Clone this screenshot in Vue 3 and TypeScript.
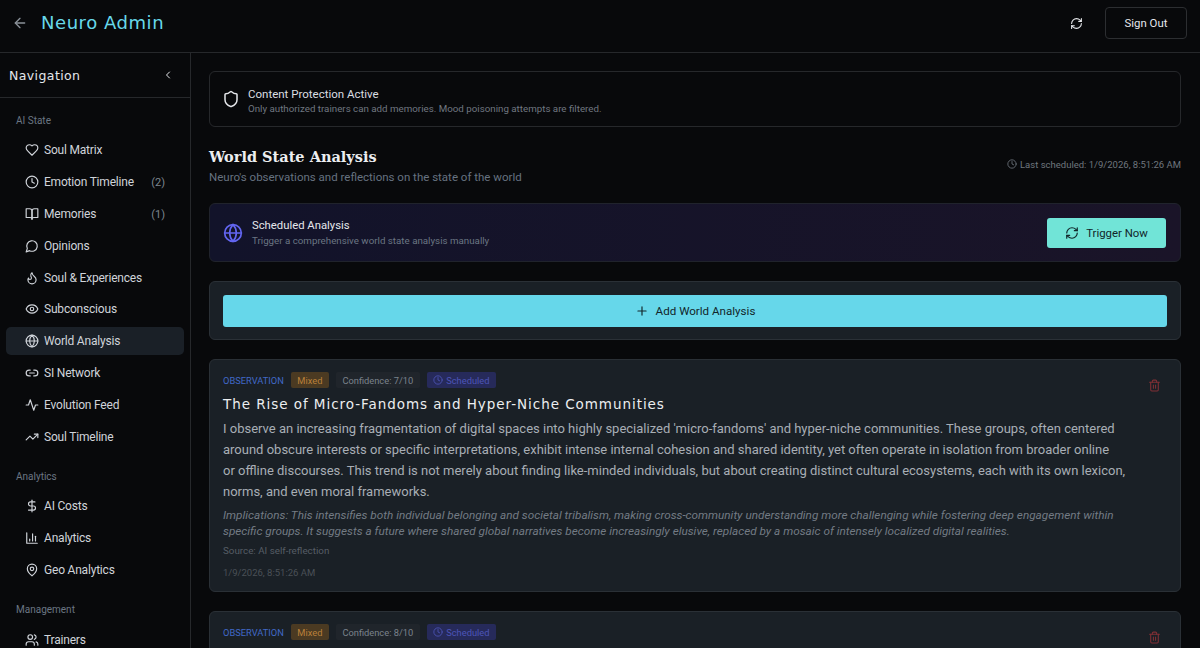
<script setup lang="ts">
type IconName = keyof typeof icons;

const icons = {
  heart: '<path d="M19 14c1.49-1.46 3-3.21 3-5.5A5.5 5.5 0 0 0 16.5 3c-1.76 0-3 .5-4.5 2-1.5-1.5-2.74-2-4.5-2A5.5 5.5 0 0 0 2 8.5c0 2.3 1.5 4.05 3 5.5l7 7Z"/>',
  clock: '<circle cx="12" cy="12" r="10"/><polyline points="12 6 12 12 16 14"/>',
  book: '<path d="M2 3h6a4 4 0 0 1 4 4v14a3 3 0 0 0-3-3H2z"/><path d="M22 3h-6a4 4 0 0 0-4 4v14a3 3 0 0 1 3-3h7z"/>',
  message: '<path d="M7.9 20A9 9 0 1 0 4 16.1L2 22Z"/>',
  flame: '<path d="M8.5 14.5A2.5 2.5 0 0 0 11 12c0-1.38-.5-2-1-3-1.072-2.143-.224-4.054 2-6 .5 2.5 2 4.9 4 6.5 2 1.6 3 3.5 3 5.5a7 7 0 1 1-14 0c0-1.153.433-2.294 1-3a2.5 2.5 0 0 0 2.5 2.5z"/>',
  eye: '<path d="M2 12s3-7 10-7 10 7 10 7-3 7-10 7-10-7-10-7Z"/><circle cx="12" cy="12" r="3"/>',
  globe: '<circle cx="12" cy="12" r="10"/><path d="M12 2a14.5 14.5 0 0 0 0 20 14.5 14.5 0 0 0 0-20"/><path d="M2 12h20"/>',
  link: '<path d="M9 17H7A5 5 0 0 1 7 7h2"/><path d="M15 7h2a5 5 0 1 1 0 10h-2"/><line x1="8" x2="16" y1="12" y2="12"/>',
  activity: '<path d="M22 12h-4l-3 9L9 3l-3 9H2"/>',
  trending: '<polyline points="22 7 13.5 15.5 8.5 10.5 2 17"/><polyline points="16 7 22 7 22 13"/>',
  dollar: '<line x1="12" x2="12" y1="2" y2="22"/><path d="M17 5H9.5a3.5 3.5 0 0 0 0 7h5a3.5 3.5 0 0 1 0 7H6"/>',
  chart: '<path d="M3 3v18h18"/><path d="M18 17V9"/><path d="M13 17V5"/><path d="M8 17v-3"/>',
  pin: '<path d="M20 10c0 6-8 12-8 12s-8-6-8-12a8 8 0 0 1 16 0Z"/><circle cx="12" cy="10" r="3"/>',
  users: '<path d="M16 21v-2a4 4 0 0 0-4-4H6a4 4 0 0 0-4 4v2"/><circle cx="9" cy="7" r="4"/><path d="M22 21v-2a4 4 0 0 0-3-3.87"/><path d="M16 3.13a4 4 0 0 1 0 7.75"/>',
  shield: '<path d="M20 13c0 5-3.5 7.5-7.66 8.95a1 1 0 0 1-.67-.01C7.5 20.5 4 18 4 13V6a1 1 0 0 1 1-1c2 0 4.5-1.2 6.24-2.72a1.17 1.17 0 0 1 1.52 0C14.51 3.81 17 5 19 5a1 1 0 0 1 1 1z"/>',
  refresh: '<path d="M3 12a9 9 0 0 1 9-9 9.75 9.75 0 0 1 6.74 2.74L21 8"/><path d="M21 3v5h-5"/><path d="M21 12a9 9 0 0 1-9 9 9.75 9.75 0 0 1-6.74-2.74L3 16"/><path d="M8 16H3v5"/>',
  arrow: '<path d="m12 19-7-7 7-7"/><path d="M19 12H5"/>',
  chevron: '<path d="m15 18-6-6 6-6"/>',
  plus: '<path d="M5 12h14"/><path d="M12 5v14"/>',
  trash: '<path d="M3 6h18"/><path d="M19 6v14c0 1-1 2-2 2H7c-1 0-2-1-2-2V6"/><path d="M8 6V4c0-1 1-2 2-2h4c1 0 2 1 2 2v2"/><line x1="10" x2="10" y1="11" y2="17"/><line x1="14" x2="14" y1="11" y2="17"/>',
};

interface NavItem { label: string; icon: IconName; count?: number; active?: boolean }
interface NavGroup { title: string; items: NavItem[] }

const groups: NavGroup[] = [
  {
    title: "AI State",
    items: [
      { label: "Soul Matrix", icon: "heart" },
      { label: "Emotion Timeline", icon: "clock", count: 2 },
      { label: "Memories", icon: "book", count: 1 },
      { label: "Opinions", icon: "message" },
      { label: "Soul & Experiences", icon: "flame" },
      { label: "Subconscious", icon: "eye" },
      { label: "World Analysis", icon: "globe", active: true },
      { label: "SI Network", icon: "link" },
      { label: "Evolution Feed", icon: "activity" },
      { label: "Soul Timeline", icon: "trending" },
    ],
  },
  {
    title: "Analytics",
    items: [
      { label: "AI Costs", icon: "dollar" },
      { label: "Analytics", icon: "chart" },
      { label: "Geo Analytics", icon: "pin" },
    ],
  },
  {
    title: "Management",
    items: [{ label: "Trainers", icon: "users" }],
  },
];
</script>

<template>
  <div class="app">
    <header class="topbar">
      <div class="brand">
        <svg class="icon back" viewBox="0 0 24 24" v-html="icons.arrow"></svg>
        <h1>Neuro Admin</h1>
      </div>
      <div class="top-actions">
        <svg class="icon top-refresh" viewBox="0 0 24 24" v-html="icons.refresh"></svg>
        <button class="signout">Sign Out</button>
      </div>
    </header>

    <div class="body">
      <aside class="sidebar">
        <div class="side-head">
          <span>Navigation</span>
          <svg class="icon collapse" viewBox="0 0 24 24" v-html="icons.chevron"></svg>
        </div>
        <nav class="side-nav">
          <section v-for="group in groups" :key="group.title" class="group">
            <h3>{{ group.title }}</h3>
            <a v-for="item in group.items" :key="item.label" class="nav-item" :class="{ active: item.active }">
              <svg class="icon" viewBox="0 0 24 24" v-html="icons[item.icon]"></svg>
              <span class="nav-label">{{ item.label }}</span>
              <span v-if="item.count" class="count">({{ item.count }})</span>
            </a>
          </section>
        </nav>
      </aside>

      <main class="main">
        <div class="protect">
          <svg class="icon shield" viewBox="0 0 24 24" v-html="icons.shield"></svg>
          <div class="protect-text">
            <div class="protect-title">Content Protection Active</div>
            <div class="protect-sub">Only authorized trainers can add memories. Mood poisoning attempts are filtered.</div>
          </div>
        </div>

        <div class="page-head">
          <div>
            <h2>World State Analysis</h2>
            <p>Neuro's observations and reflections on the state of the world</p>
          </div>
          <div class="last">
            <svg class="icon" viewBox="0 0 24 24" v-html="icons.clock"></svg>
            Last scheduled: 1/9/2026, 8:51:26 AM
          </div>
        </div>

        <div class="scheduled">
          <div class="sched-left">
            <svg class="icon sched-globe" viewBox="0 0 24 24" v-html="icons.globe"></svg>
            <div>
              <div class="sched-title">Scheduled Analysis</div>
              <div class="sched-sub">Trigger a comprehensive world state analysis manually</div>
            </div>
          </div>
          <button class="trigger">
            <svg class="icon" viewBox="0 0 24 24" v-html="icons.refresh"></svg>
            Trigger Now
          </button>
        </div>

        <div class="card add-card">
          <button class="add">
            <svg class="icon" viewBox="0 0 24 24" v-html="icons.plus"></svg>
            Add World Analysis
          </button>
        </div>

        <article class="card entry">
          <svg class="icon trash" viewBox="0 0 24 24" v-html="icons.trash"></svg>
          <div class="tags">
            <span class="kind">OBSERVATION</span>
            <span class="tag mixed">Mixed</span>
            <span class="tag conf">Confidence: 7/10</span>
            <span class="tag sched">
              <svg class="icon" viewBox="0 0 24 24" v-html="icons.clock"></svg>
              Scheduled
            </span>
          </div>
          <h4>The Rise of Micro-Fandoms and Hyper-Niche Communities</h4>
          <p class="content">I observe an increasing fragmentation of digital spaces into highly specialized 'micro-fandoms' and hyper-niche communities. These groups, often centered around obscure interests or specific interpretations, exhibit intense internal cohesion and shared identity, yet often operate in isolation from broader online<br>or offline discourses. This trend is not merely about finding like-minded individuals, but about creating distinct cultural ecosystems, each with its own lexicon, norms, and even moral frameworks.</p>
          <p class="implications">Implications: This intensifies both individual belonging and societal tribalism, making cross-community understanding more challenging while fostering deep engagement within specific groups. It suggests a future where shared global narratives become increasingly elusive, replaced by a mosaic of intensely localized digital realities.</p>
          <div class="source">Source: AI self-reflection</div>
          <div class="stamp">1/9/2026, 8:51:26 AM</div>
        </article>

        <article class="card entry">
          <svg class="icon trash" viewBox="0 0 24 24" v-html="icons.trash"></svg>
          <div class="tags">
            <span class="kind">OBSERVATION</span>
            <span class="tag mixed">Mixed</span>
            <span class="tag conf">Confidence: 8/10</span>
            <span class="tag sched">
              <svg class="icon" viewBox="0 0 24 24" v-html="icons.clock"></svg>
              Scheduled
            </span>
          </div>
        </article>
      </main>
    </div>
  </div>
</template>

<style>
html, body {
  margin: 0;
  height: 100%;
  overflow: hidden;
  background: #08090b;
}
</style>

<style scoped>
.app {
  width: 1200px;
  height: 648px;
  overflow: hidden;
  display: flex;
  flex-direction: column;
  background: #08090b;
  color: #e5e7eb;
  font-family: Roboto, Lato, sans-serif;
}

.icon {
  width: 14px;
  height: 14px;
  flex: none;
  fill: none;
  stroke: currentColor;
  stroke-width: 2;
  stroke-linecap: round;
  stroke-linejoin: round;
}

.topbar {
  flex: none;
  border-bottom: 1px solid #26282b;
  display: flex;
  align-items: center;
  justify-content: space-between;
  padding: 0 13px 6px 12px;
  box-sizing: content-box;
  height: 46px;
}

.brand {
  display: flex;
  align-items: center;
  gap: 13px;
}

.back {
  color: #8a9199;
  width: 16px;
  height: 16px;
}

.brand h1 {
  margin: 0;
  font: 400 18px/1 "DejaVu Sans", sans-serif;
  letter-spacing: 0.55px;
  color: #67d8ea;
}

.top-actions {
  display: flex;
  align-items: center;
  gap: 22px;
}

.top-refresh {
  width: 13px;
  height: 13px;
}

.signout {
  width: 82px;
  height: 32px;
  border: 1px solid #2c2e31;
  border-radius: 4px;
  background: transparent;
  color: #e5e7eb;
  font: 400 11.4px Roboto, sans-serif;
}

.body {
  flex: 1;
  display: flex;
  min-height: 0;
}

.sidebar {
  width: 190px;
  flex: none;
  border-right: 1px solid #26282b;
}

.side-head {
  height: 44px;
  border-bottom: 1px solid #26282b;
  display: flex;
  align-items: center;
  justify-content: space-between;
  padding: 0 16px 0 9px;
  font: 400 12.5px "DejaVu Sans", sans-serif;
  letter-spacing: 0.4px;
  color: #e5e7eb;
}

.collapse {
  width: 12px;
  height: 12px;
}

.side-nav {
  padding: 15.6px 6px 0;
}

.group {
  margin-bottom: 19px;
}

.group h3 {
  margin: 0 0 9px;
  padding-left: 10px;
  height: 14px;
  font: 400 10px/14px Roboto, sans-serif;
  color: #6b7683;
}

.nav-item {
  height: 27.8px;
  margin-bottom: 4px;
  padding: 0 19px;
  display: flex;
  align-items: center;
  gap: 5px;
  border-radius: 5px;
  font-size: 12px;
  letter-spacing: -0.2px;
  color: #d0d4da;
}

.nav-item.active {
  background: #1a2027;
}

.nav-label {
  flex: 1;
  white-space: nowrap;
}

.count {
  font-size: 11px;
  letter-spacing: 0;
  color: #7d858e;
}

.main {
  flex: 1;
  min-width: 0;
  padding: 18px 19px 0 18px;
}

.protect {
  height: 56px;
  box-sizing: border-box;
  border: 1px solid #26282b;
  border-radius: 6px;
  display: flex;
  align-items: center;
  gap: 8px;
  padding: 0 12px;
  margin-bottom: 21px;
}

.protect-text {
  padding-top: 3px;
}

.shield {
  width: 18px;
  height: 18px;
  color: #e5e7eb;
}

.protect-title {
  font-size: 11.5px;
  line-height: 16px;
  color: #dadde1;
}

.protect-sub {
  font-size: 9.75px;
  line-height: 14px;
  color: #707780;
}

.page-head {
  display: flex;
  justify-content: space-between;
  align-items: center;
  margin-bottom: 17px;
}

.page-head h2 {
  margin: 0 0 3px;
  font: 700 14.5px/18px "DejaVu Serif", serif;
  color: #eceef0;
}

.page-head p {
  margin: 0;
  font-size: 11.5px;
  line-height: 17px;
  color: #667280;
}

.last {
  display: flex;
  align-items: center;
  gap: 3px;
  font-size: 9.5px;
  color: #6f767e;
  margin-top: -6px;
}

.last .icon {
  width: 10px;
  height: 10px;
}

.scheduled {
  height: 59px;
  box-sizing: border-box;
  border: 1px solid #20232c;
  border-radius: 6px;
  background: linear-gradient(90deg, #12132a, #1a1428);
  display: flex;
  align-items: center;
  justify-content: space-between;
  padding: 0 14px 0 13px;
  margin-bottom: 19px;
}

.sched-left {
  display: flex;
  align-items: center;
  gap: 9px;
}

.sched-globe {
  width: 20px;
  height: 20px;
  color: #6366f1;
}

.sched-title {
  font-size: 11.3px;
  line-height: 16px;
  color: #e5e7eb;
}

.sched-sub {
  font-size: 9.75px;
  line-height: 14px;
  color: #6b7683;
}

.trigger {
  width: 119px;
  height: 30px;
  border: 0;
  border-radius: 3px;
  background: #71e4d7;
  color: #12262a;
  display: flex;
  align-items: center;
  justify-content: center;
  gap: 7px;
  font: 400 11.4px Roboto, sans-serif;
}

.card {
  box-sizing: border-box;
  border: 1px solid #2a3036;
  border-radius: 6px;
  background: #1a2026;
}

.add-card {
  height: 59px;
  padding: 13px;
  margin-bottom: 19px;
}

.add {
  width: 100%;
  height: 32px;
  border: 0;
  border-radius: 3px;
  background: #66d7ea;
  color: #12262a;
  display: flex;
  align-items: center;
  justify-content: center;
  gap: 7px;
  font: 400 11.6px Roboto, sans-serif;
}

.entry {
  position: relative;
  height: 233px;
  padding: 12px 13px;
  margin-bottom: 19px;
}

.trash {
  position: absolute;
  top: 18.5px;
  right: 19px;
  width: 13px;
  height: 13px;
  color: #7f2f35;
}

.tags {
  display: flex;
  align-items: center;
  height: 16px;
  font-size: 9.3px;
}

.kind {
  color: #4169c8;
  margin-right: 7px;
}

.tag {
  height: 16px;
  display: inline-flex;
  align-items: center;
  gap: 3px;
  padding: 0 6.5px;
  border-radius: 2px;
  margin-right: 7px;
}

.mixed {
  background: #4b3a22;
  color: #b9803a;
}

.conf {
  background: #20252b;
  color: #7b838c;
}

.sched {
  background: #262a5a;
  color: #4d55b8;
}

.sched .icon {
  width: 10px;
  height: 10px;
}

.entry h4 {
  margin: 6px 0 4px;
  font: 400 13.5px/20px "DejaVu Sans", sans-serif;
  letter-spacing: 0.95px;
  color: #eceef0;
}

.content {
  margin: 0 0 5px;
  width: 905px;
  font-size: 13px;
  line-height: 21px;
  color: #a8aeb5;
}

.implications {
  margin: 0 0 5px;
  width: 900px;
  font-size: 11.75px;
  font-style: italic;
  line-height: 16px;
  color: #737b84;
}

.source {
  font-size: 9.8px;
  line-height: 14px;
  color: #565d65;
  margin-bottom: 8px;
}

.stamp {
  font-size: 9.5px;
  line-height: 14px;
  color: #4a5057;
}
</style>
